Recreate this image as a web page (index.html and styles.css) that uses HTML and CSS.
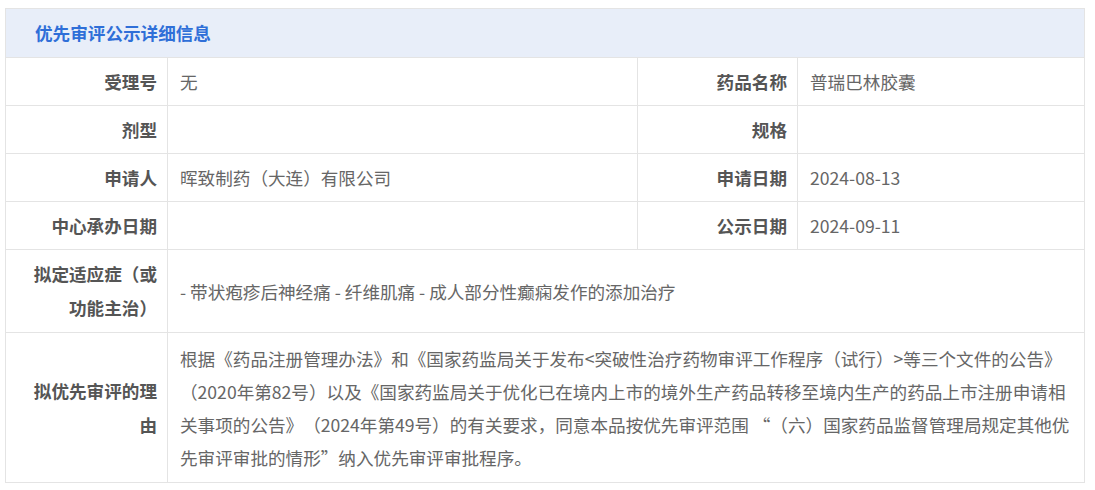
FILE: index.html
```html
<!DOCTYPE html>
<html lang="zh-CN">
<head>
<meta charset="utf-8">
<title>优先审评公示详细信息</title>
<link rel="stylesheet" href="styles.css">
</head>
<body>
<div class="wrap">
<table class="info">
  <colgroup>
    <col class="c1"><col class="c2"><col class="c3"><col class="c4">
  </colgroup>
  <thead>
    <tr><th colspan="4" class="title">优先审评公示详细信息</th></tr>
  </thead>
  <tbody>
    <tr>
      <td class="lbl">受理号</td><td class="val">无</td>
      <td class="lbl">药品名称</td><td class="val">普瑞巴林胶囊</td>
    </tr>
    <tr>
      <td class="lbl">剂型</td><td class="val"></td>
      <td class="lbl">规格</td><td class="val"></td>
    </tr>
    <tr>
      <td class="lbl">申请人</td><td class="val">晖致制药（大连）有限公司</td>
      <td class="lbl">申请日期</td><td class="val">2024-08-13</td>
    </tr>
    <tr>
      <td class="lbl">中心承办日期</td><td class="val"></td>
      <td class="lbl">公示日期</td><td class="val">2024-09-11</td>
    </tr>
    <tr class="tall">
      <td class="lbl">拟定适应症（或功能主治）</td>
      <td class="val" colspan="3">- 带状疱疹后神经痛 - 纤维肌痛 - 成人部分性癫痫发作的添加治疗</td>
    </tr>
    <tr class="reason">
      <td class="lbl">拟优先审评的理由</td>
      <td class="val" colspan="3">根据《药品注册管理办法》和《国家药监局关于发布&lt;突破性治疗药物审评工作程序（试行）&gt;等三个文件的公告》（2020年第82号）以及《国家药监局关于优化已在境内上市的境外生产药品转移至境内生产的药品上市注册申请相关事项的公告》（2024年第49号）的有关要求，同意本品按优先审评范围 “（六）国家药品监督管理局规定其他优先审评审批的情形”纳入优先审评审批程序。</td>
    </tr>
  </tbody>
</table>
</div>
</body>
</html>
```

FILE: styles.css
```css
html, body {
  margin: 0;
  padding: 0;
  background: #ffffff;
}
body {
  font-family: "Microsoft YaHei", "Noto Sans CJK SC", "Noto Sans", sans-serif;
  font-size: 17.6px;
  color: #666666;
  text-spacing-trim: space-all;
}
.wrap {
  padding: 8px 10px 0 5px;
}
.info {
  width: 1079px;
  border-collapse: collapse;
  table-layout: fixed;
}
.c1 { width: 162px; }
.c2 { width: 470px; }
.c3 { width: 160px; }
.c4 { width: 287px; }
.info th, .info td {
  border: 1px solid #e4e4e4;
}
.title {
  background: #e8eef9;
  color: #2f6fd8;
  font-weight: bold;
  font-size: 17.6px;
  text-align: left;
  padding: 0 0 0 29px;
  height: 48px;
  line-height: 48px;
}
.info td {
  padding: 7px 12px 7px 12px;
  line-height: 33px;
  vertical-align: middle;
}
.info td.lbl {
  text-align: right;
  font-weight: bold;
  color: #555555;
  padding: 7px 10px 7px 20px;
}
.tall td {
  padding-top: 8px;
  padding-bottom: 7px;
}
.tall td.lbl {
  line-height: 34px;
}
.reason td.val {
  padding-top: 9px;
  padding-bottom: 8px;
  line-height: 33px;
}
.reason td.lbl {
  line-height: 34px;
}
```
